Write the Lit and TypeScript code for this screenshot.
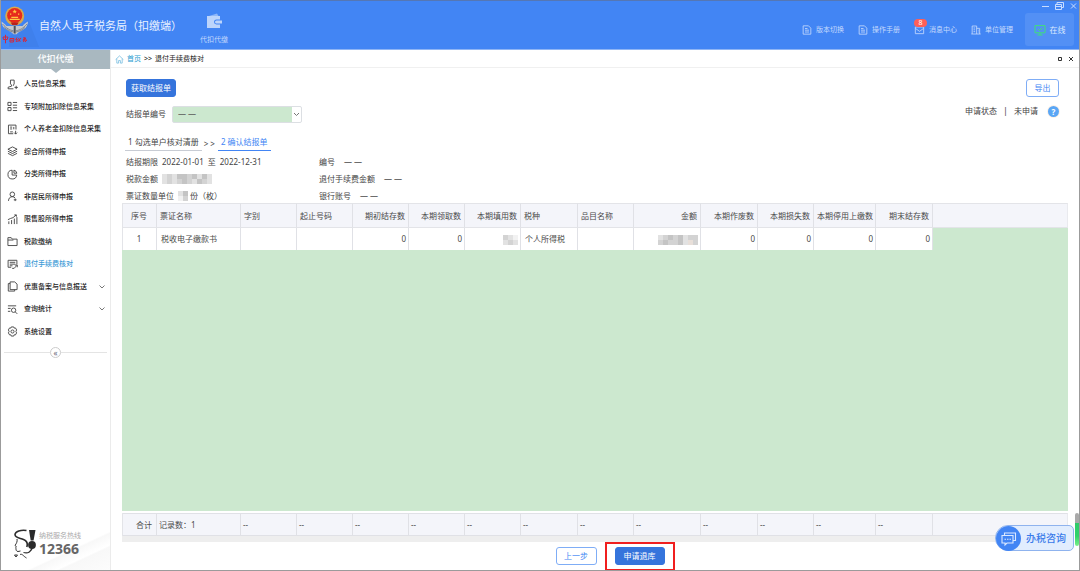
import { LitElement, html, css, svg, nothing, TemplateResult } from "lit";
import { customElement } from "lit/decorators.js";
import { classMap } from "lit/directives/class-map.js";

type Icon = TemplateResult;

/* 12-unit stroke icons for the navigation */
const icons: Record<string, Icon> = {
  person: svg`<path d="M3.800 1.200h4v4.200L7 6.600v.8M3.800 1.200v4.200L5 6.600v1.200L1.200 9v1.700h5.800M10 7.400v3.600M8.200 9.200h3.600"/>`,
  list: svg`<path d="M1 1.500h3.400v3.400H1zM1 7.100h3.400v3.400H1zM6.400 1.600H11M6.400 4.600H11M6.400 7.400H11M6.400 10.400H11"/>`,
  pension: svg`<path d="M9.800 6V1.200H1.600v9.400h5.200M3.400 3.400h2.200M3.400 5.400h2.200M3.400 8.600h3M7.400 3.200v2.600M9.400 7.400v3.600M7.800 9.400l1.600 1.600L11 9.400"/>`,
  layers: svg`<path d="M6 1l5 2.500L6 6 1 3.500zM1 5.700L6 8.200l5-2.500M1 8L6 10.500 11 8"/>`,
  pie: svg`<path d="M5.600 1.300A4.800 4.800 0 1 0 10.600 6.600H5.600z"/><path d="M7.600 1.200a4.400 4.400 0 0 1 3.200 3.400H7.600z"/>`,
  user: svg`<circle cx="5.800" cy="3.600" r="2.500"/><path d="M1.600 10.800c.2-3 1.800-4.600 4.200-4.600 1.400 0 2.400.5 3 1.400M7.400 9.600h3M8.900 8.200v2.800"/>`,
  chart: svg`<path d="M2 11V8M5 11V6.600M8 11V5M10.800 11V3.400M1 6.200l3-1.400 2.600-.8L10 1M8 1h2.200v2"/>`,
  folder: svg`<path d="M1 10.400V1.800h3.600l1.200 1.600H11v7zM1 4.400h6"/>`,
  refund: svg`<path d="M4.600 9H1.200V1.400h9.600V6M3 3.600h6M3 5.600h6M3 7.400h3M5.600 10.200h2.200L10.800 7M8.600 6.600h2.600v2.400"/>`,
  copy: svg`<path d="M3.400 1h5L11 3.400v6H3.400zM3.400 2.800H1.400V11h7V9.400"/>`,
  search: svg`<path d="M1 2h9M1 4.800h3M1 8h2.600"/><circle cx="7.200" cy="6.800" r="2.400"/><path d="M9 8.600l2.200 2.200"/>`,
  gear: svg`<path d="M4.700 1h2.600l.5 1.300 1.400-.2 1.300 2.200L9.700 6l.8 1.500-1.300 2.200-1.400-.1L7.300 11H4.700l-.5-1.400-1.400.1-1.300-2.200L2.300 6l-.8-1.700 1.300-2.200 1.400.2z"/><circle cx="6" cy="6" r="1.700"/>`,
  doc: svg`<path d="M1.400 1h6.400L10.600 3.800V11H1.400zM3.600 4.200h3M3.600 6.200h4.800M3.600 8.400h4.800"/>`,
  mail: svg`<path d="M1 2.400h10v8H1zM1 4l5 3.600L11 4"/>`,
  building: svg`<path d="M1.400 10.800V1.200h5.400v9.600M6.800 4h3.600v6.800M.4 10.800h11.200M3 3.600h2M3 5.800h2M3 8h2M8.400 6.200h.8M8.400 8.400h.8"/>`,
  monitor: svg`<path d="M1 1.600h10v7.200H1zM3.400 11h5.200M4 5l1.600 1.600L8.400 3.800M6 8.800V11"/>`,
  home: svg`<path d="M.8 6.200L6 1.200l5.200 5M2.400 5v5.800h2.400V7.400h2.400v3.400h2.400V5"/>`,
};

const icon = (name: string, cls = "") =>
  html`<svg class="ico ${cls}" viewBox="0 0 12 12" aria-hidden="true">${icons[name]}</svg>`;

const nav = [
  { icon: "person", label: "人员信息采集" },
  { icon: "list", label: "专项附加扣除信息采集" },
  { icon: "pension", label: "个人养老金扣除信息采集" },
  { icon: "layers", label: "综合所得申报" },
  { icon: "pie", label: "分类所得申报" },
  { icon: "user", label: "非居民所得申报" },
  { icon: "chart", label: "限售股所得申报" },
  { icon: "folder", label: "税款缴纳" },
  { icon: "refund", label: "退付手续费核对", active: true },
  { icon: "copy", label: "优惠备案与信息报送", more: true },
  { icon: "search", label: "查询统计", more: true },
  { icon: "gear", label: "系统设置" },
];

const columns = [
  { label: "序号", cls: "c34 mid" },
  { label: "票证名称", cls: "c84" },
  { label: "字别", cls: "c56" },
  { label: "起止号码", cls: "c56" },
  { label: "期初结存数", cls: "c56 num" },
  { label: "本期领取数", cls: "c56 num" },
  { label: "本期填用数", cls: "c56 num" },
  { label: "税种", cls: "c57" },
  { label: "品目名称", cls: "c56" },
  { label: "金额", cls: "c67 num" },
  { label: "本期作废数", cls: "c57 num" },
  { label: "本期损失数", cls: "c56 num" },
  { label: "本期停用上缴数", cls: "c62 num" },
  { label: "期末结存数", cls: "c57 num" },
];

const tones: Record<string, string> = {
  a: "#f2f2f2", b: "#e2e2e2", c: "#d3d3d3", d: "#c4c4c4", e: "#e8dfd9",
};

/* masked value: one letter per tile, one string per line */
const mask = (rows: string[]) => html`<svg class="mask" width=${rows[0].length * 5} height=${rows.length * 5} role="img" aria-label="已隐藏">
  ${rows.map((r, y) => [...r].map((t, x) => svg`<rect x=${x * 5} y=${y * 5} width="5" height="5" fill=${tones[t]}></rect>`))}
</svg>`;

const dataRow = [
  "1", "税收电子缴款书", "", "", "0", "0", mask(["cba", "bcb"]), "个人所得税", "",
  mask(["bcdcdbcc", "cdccdbec"]), "0", "0", "0", "0",
];

const totals = ["合计", "记录数：1", ...Array(12).fill("--")];

const font = css`font-family: "Noto Sans", "Noto Sans CJK SC", sans-serif;`;

@customElement("tax-header")
class TaxHeader extends LitElement {
  static styles = css`
    :host { display: flex; height: 49px; box-sizing: border-box; background: #4285f4; color: #dbe8ff; border-top: 1px solid #5577b4; position: relative; ${font} }
    .emblem { width: 38px; height: 48px; flex: none; }
    h1 { margin: 0; font-size: 11px; font-weight: 400; line-height: 50px; color: #e9f1ff; white-space: nowrap; }
    .app { display: flex; flex-direction: column; align-items: center; margin-left: 17px; padding: 12px 0 0; width: 30px; gap: 3px; font: inherit; font-size: 7px; line-height: 16px; color: #c5dafd; background: none; border: 0; white-space: nowrap; }
    .app svg { width: 16px; height: 16px; display: block; }
    .links { display: flex; gap: 14px; margin-left: auto; align-items: center; padding-top: 12px; height: 34px; box-sizing: content-box; }
    .links a { display: flex; align-items: center; gap: 4px; font-size: 7px; line-height: 12px; color: #c5dafd; text-decoration: none; white-space: nowrap; position: relative; }
    .ico { width: 10px; height: 10px; fill: none; stroke: currentColor; stroke-width: 1; flex: none; }
    .wide { width: 11px; }
    .badge { position: absolute; left: 0; top: -5px; width: 13px; height: 8px; border-radius: 4px; background: #ff5f57; color: #fff; font-size: 7px; line-height: 8px; text-align: center; }
    .online { margin: 12px 5px 0 12px; width: 49px; height: 33px; box-sizing: border-box; border: 0; padding: 0; border-radius: 3px; background: #5390f5; color: #dceaff; display: flex; align-items: center; justify-content: center; gap: 4px; font: inherit; font-size: 8px; }
    .green { width: 12px; height: 12px; stroke: #3fe07a; }
    .win { position: absolute; right: 1px; top: 0; display: flex; gap: 5px; }
    .win button { width: 9px; height: 10px; padding: 0; border: 0; background: none; color: #c9dcff; }
    .win svg { display: block; width: 9px; height: 10px; fill: none; stroke: currentColor; }
  `;
  render() {
    return html`
      <svg class="emblem" viewBox="0 0 38 48" role="img" aria-label="中国税务">
        <path d="M27 18L38 46H8V36z" fill="#3f80ec"></path>
        <path d="M.5 20.500c2 1.500 3 2 5 4.500h16c2-2.500 3-3 5.500-4.500-.2 3.500-1.500 6-4.500 8-2.500 1.800-5.500 2.500-6.800 4.800h-3.400C11 31 8 30.300 5.500 28.500 2 26.500.7 24 .5 20.500z" fill="#c5c8cc"></path>
        <path d="M1.500 23c4 4.500 7 6 11 6.800M26 23c-4 4.500-7 6-11 6.800M3.500 26.500c3 3 5 3.500 9 4.500M24 26.500c-3 3-5 3.500-9 4.500" fill="none" stroke="#707784" stroke-width=".8"></path>
        <circle cx="13.700" cy="15" r="9.500" fill="#d9a84c"></circle>
        <circle cx="13.700" cy="14.500" r="7.600" fill="#e62a1c"></circle>
        <path d="M13.700 8.300l.6 1.500 1.600.1-1.200 1 .4 1.600-1.400-.9-1.400.9.4-1.600-1.200-1 1.600-.1zM9 12.400h1.300v1.300H9zM17 12.400h1.300v1.300H17zM8.700 17.800h10V19h-10zM10.300 15.800h6.800v1.200h-6.800z" fill="#ffc943"></path>
        <path d="M9.700 21.500h8l-1.500 2.500h-5z" fill="#b8221d"></path>
        <path d="M12.700 25h2v7.500h-2z" fill="#4d525c"></path>
        <path d="M4.500 33.800v8.500M2 36h5l-.8 2.500H2.500zM9 37.500h4l-.5 3.500H9zM9.500 39.200h2.800M16 36.500l-1.300 2.300 1.800-.3-1.500 2.500M17.500 37l1.700 3.800M20 37l-3.500 4M22 36.800l3 .7-3.200 1.500h4l-1.800 2M24 36l-1.500 5" fill="none" stroke="#d5283c" stroke-width="1"></path>
      </svg>
      <h1>自然人电子税务局（扣缴端）</h1>
      <button class="app">
        <svg viewBox="0 0 16 16" aria-hidden="true">
          <path d="M3 3l8-2.500 1.500 2.500" fill="#8fb7f8"></path>
          <path d="M1 3h13v3.500h-3.500a2.500 2.500 0 0 0 0 5H14V15H1z" fill="#bcd4fb"></path>
          <path d="M10.500 7.500H16v3h-5.500a1.500 1.500 0 0 1 0-3z" fill="#bcd4fb"></path>
        </svg>代扣代缴
      </button>
      <nav class="links">
        <a href="#">${icon("doc")}版本切换</a>
        <a href="#">${icon("doc")}操作手册</a>
        <a href="#">${icon("mail", "wide")}消息中心<span class="badge">8</span></a>
        <a href="#">${icon("building")}单位管理</a>
      </nav>
      <button class="online">${icon("monitor", "green")}在线</button>
      <div class="win">
        <button aria-label="最小化"><svg viewBox="0 0 9 10"><path d="M1 5.500h7"/></svg></button>
        <button aria-label="还原"><svg viewBox="0 0 9 10"><path d="M.5 3.500h6v5h-6zM2 3V1.500h6.500v5H7M.5 5.500h6"/></svg></button>
        <button aria-label="关闭"><svg viewBox="0 0 9 10"><path d="M2 2.500l5 5M7 2.500l-5 5"/></svg></button>
      </div>`;
  }
}

@customElement("tax-sidebar")
class TaxSidebar extends LitElement {
  static styles = css`
    :host { display: flex; flex-direction: column; width: 109px; flex: none; border-right: 1px solid #ebebeb; background: #fff; color: #1c1c1c; ${font} }
    h2 { margin: 0; height: 19px; background: #a9b8c0; color: #fff; font-size: 9px; font-weight: 500; line-height: 18px; text-align: center; position: relative; }
    h2::after { content: ""; position: absolute; left: 50%; top: 19px; margin-left: -5px; border: 5px solid transparent; border-top: 4px solid #a9b8c0; border-bottom: 0; }
    ul { list-style: none; margin: 4px 0 0; padding: 0; height: 270px; display: grid; grid-template-rows: repeat(12, 1fr); }
    a { display: flex; align-items: center; height: 100%; padding: 0 5px 0 6px; font-size: 7px; font-weight: 500; color: inherit; text-decoration: none; white-space: nowrap; }
    .ico { width: 11px; height: 11px; margin-right: 6px; fill: none; stroke: #444; stroke-width: 1; flex: none; }
    .active { color: #3d9bd6; }
    .chev { width: 6px; height: 4px; margin-left: auto; fill: none; stroke: #777; }
    .fold { display: flex; align-items: center; margin: 4px 3px 0; }
    .fold::before, .fold::after { content: ""; flex: 1; border-top: 1px solid #e4e4e4; }
    .fold button { width: 11px; height: 11px; padding: 0; border: 1px solid #ccc; border-radius: 50%; background: #fff; color: #667; font: inherit; font-size: 8px; line-height: 6px; }
    .hot { margin-top: auto; height: 46px; display: flex; gap: 3px; padding-left: 13px; background: linear-gradient(155deg, #fff 60%, #f8f8f8 62%, #fff 74%, #f8f8f8 76%, #fcfcfc); }
    .hot svg { width: 22px; height: 30px; margin-top: 5px; }
    .hot p { margin: 8px 0 0; font-size: 7px; line-height: 8px; color: #aaa; white-space: nowrap; }
    .hot strong { display: block; font-size: 14px; line-height: 18px; color: #666; }
  `;
  render() {
    return html`
      <h2>代扣代缴</h2>
      <ul>
        ${nav.map((n) => html`<li><a href="#" class=${classMap({ active: !!n.active })}>${icon(n.icon)}${n.label}${n.more
          ? html`<svg class="chev" viewBox="0 0 6 4"><path d="M.5.5L3 3 5.500.5"/></svg>` : nothing}</a></li>`)}
      </ul>
      <div class="fold"><button aria-label="收起">«</button></div>
      <div class="hot">
        <svg viewBox="0 0 22 30" aria-hidden="true">
          <path d="M12.500 1.500C7 .5 1.200 2.500 1 5.500c0 3.500 5 3.500 8.500 5 3 1.300 4.500 4 3.300 7.500" fill="none" stroke="#2d2d2d" stroke-width="1.600"></path>
          <path d="M15 1h6.500l-2 10.500h-2.800z" fill="#2a2a2a"></path>
          <circle cx="18" cy="16" r="3.900" fill="#2a2a2a"></circle>
          <path d="M18.500 18c-1 4.500-4.500 7-9 5.500" fill="none" stroke="#2d2d2d" stroke-width="1.300"></path>
          <path d="M3 10c.5 2.500-.3 4-2 6.500l1.300 1c-.8 1-.3 1.500-.3 2.500s.5 2.500 2 2.500l2.500-.5" fill="none" stroke="#333" stroke-width="1"></path>
          <path d="M6 25.500c2.500-1 3 1.500 6.500 3.500M.5 26h3l-1.500 2z" fill="none" stroke="#333" stroke-width="1"></path>
        </svg>
        <p>纳税服务热线<strong>12366</strong></p>
      </div>`;
  }
}

@customElement("voucher-grid")
class VoucherGrid extends LitElement {
  static styles = css`
    :host { display: flex; flex-direction: column; flex: 1; min-height: 0; font-size: 8px; color: #4a4a4a; ${font} }
    table { width: 100%; table-layout: fixed; border-collapse: separate; border-spacing: 0; line-height: 12px; border-left: 1px solid #e3e4e8; }
    th, td { box-sizing: border-box; padding: 0 4px 0 3px; text-align: left; font-weight: 400; white-space: nowrap; border-right: 1px solid #e0e1e6; }
    th:last-child, td:last-child { border-right-color: #e9eaee; }
    th { height: 25px; background: #f4f5fa; border-top: 1px solid #e3e4e8; border-bottom: 1px solid #e3e4e8; }
    .head .num { padding-right: 3px; }
    tbody td { height: 22px; background: #fff; }
    tbody td:nth-child(2), tbody td:nth-child(8) { padding-left: 4px; }
    .num { text-align: right; }
    .mid { text-align: center; }
    .head tbody .num { padding-right: 2px; }
    tbody .rest { background: #cce8cf; border-color: #cce8cf; }
    .foot tbody td { height: 23px; background: #f4f5fa; border-top: 1px solid #e0e1e6; border-bottom: 1px solid #e0e1e6; text-align: left; padding-left: 2px; }
    .foot tbody .mid { text-align: right; padding-right: 4px; }
    .blank { flex: 1; background: #cce8cf; margin-bottom: 2px; }
    .track { height: 6px; background: #eee; }
    .mask { display: inline-block; vertical-align: middle; }
    .c34 { width: 34px; } .c84 { width: 84px; } .c56 { width: 56px; } .c57 { width: 57px; } .c62 { width: 62px; } .c67 { width: 67px; }
  `;
  render() {
    return html`
      <table class="head">
        <thead><tr>${columns.map((c) => html`<th scope="col" class=${c.cls}>${c.label}</th>`)}<th></th></tr></thead>
        <tbody><tr>${dataRow.map((v, i) => html`<td class=${columns[i].cls}>${v}</td>`)}<td class="rest"></td></tr></tbody>
      </table>
      <div class="blank"></div>
      <table class="foot">
        <tbody><tr>${totals.map((v, i) => html`<td class=${columns[i].cls}>${v}</td>`)}<td></td></tr></tbody>
      </table>
      <div class="track"></div>`;
  }
}

@customElement("app-root")
class AppRoot extends LitElement {
  static styles = css`
    :host { display: flex; flex-direction: column; height: 100vh; min-height: 480px; box-sizing: border-box; background: #fff; border: solid #9b9b9b; border-width: 0 1px 1px; position: relative; overflow: hidden; font-size: 8px; line-height: 12px; color: #444; ${font} }
    .body { flex: 1; display: flex; min-height: 0; border-top: 1px solid #8fb5f5; }
    main { flex: 1; min-width: 0; display: flex; flex-direction: column; }
    .crumb { height: 17px; display: flex; align-items: center; padding: 1px 5px 0 4px; box-sizing: border-box; height: 18px; gap: 3px; border-bottom: 1px solid #f0f0f0; font-size: 7px; color: #222; }
    .crumb a { display: flex; align-items: center; gap: 3px; color: #1b9bd0; text-decoration: none; }
    .crumb .ico { width: 9px; height: 9px; fill: none; stroke: #6fb8dd; }
    .crumb .tools { margin-left: auto; display: flex; gap: 5px; }
    .tools button { width: 6px; height: 6px; padding: 0; border: 0; background: none; }
    .tools svg { display: block; width: 6px; height: 6px; fill: none; stroke: #333; }
    .page { flex: 1; min-height: 0; display: flex; flex-direction: column; padding: 11px 11px 0; }
    .bar { display: flex; justify-content: space-between; padding: 0 9px 0 4px; }
    .btn { height: 18px; padding: 0 6px; border: 1px solid #7fadf6; border-radius: 3px; background: #fff; color: #4285f4; font: inherit; line-height: 14px; white-space: nowrap; }
    .primary { background: #3574dc; border-color: #3574dc; color: #fff; padding: 0 4px; }
    .out { width: 33px; }
    .query { margin-top: 8px; align-items: flex-start; }
    .field { display: flex; align-items: center; gap: 6px; height: 18px; }
    .pick { position: relative; display: flex; width: 130px; }
    select { appearance: none; width: 100%; height: 17px; border: 1px solid #dcdfe3; border-radius: 2px; padding: 0 14px 0 5px; background: linear-gradient(to left, #fff 9px, #cce8cf 9px); font: inherit; color: #555; }
    .pick svg { position: absolute; right: 2px; top: 6px; width: 7px; height: 5px; fill: none; stroke: #777; pointer-events: none; }
    .status { display: flex; align-items: center; gap: 6px; height: 12px; }
    .status .sep { font-size: 9px; }
    .help { width: 11px; height: 11px; margin-left: 4px; padding: 0; border: 0; border-radius: 50%; background: #5aa6f5; color: #fff; font: inherit; font-size: 8px; font-weight: 700; line-height: 11px; box-shadow: 0 0 0 1px #fdf1e6; }
    .steps { display: flex; margin: 11px 0 0 3px; height: 17px; }
    .steps span { box-sizing: border-box; padding: 2px 3px 0; border-bottom: 1px solid #c8ccd4; }
    .steps i { font-style: normal; padding: 4px 3px 0 2px; }
    .steps .on { color: #4285f4; border-color: #4285f4; }
    .info { display: grid; grid-template-columns: 193px 1fr; row-gap: 2px; margin: 3px 0 0; padding: 0 4px; line-height: 15px; }
    .info div { display: flex; gap: 4px; align-items: center; height: 15px; }
    .info dt, .info dd { margin: 0; white-space: nowrap; }
    .info dd { display: flex; align-items: center; gap: 2px; }
    .info .dash { padding-left: 5px; }
    .mask { display: block; }
    .actions { height: 28px; display: flex; justify-content: center; align-items: center; padding-left: 40px; gap: 8px; }
    .back { width: 41px; }
    .mark { border: 2px solid #f01f1f; padding: 3px 8px 4px; display: flex; }
    .send { width: 50px; }
    .chat { position: absolute; right: 5px; bottom: 19px; height: 26px; width: 79px; box-sizing: border-box; display: flex; align-items: center; gap: 5px; padding: 0; border: 1px solid #8fb3ee; border-radius: 13px 5px 5px 13px; background: #e1edfe; color: #3a7bea; font: inherit; font-size: 10px; font-weight: 500; white-space: nowrap; }
    .chat svg { width: 25px; height: 25px; flex: none; }
    .thumb { position: absolute; right: 0; bottom: 24px; width: 4px; height: 33px; border-radius: 2px; background: linear-gradient(#a9a9a9 10px, #2fcb6b 10px, #2fd36b 70%, #7cf08a); }
  `;
  render() {
    return html`
      <tax-header></tax-header>
      <div class="body">
        <tax-sidebar></tax-sidebar>
        <main>
          <div class="crumb">
            <a href="#">${icon("home")}首页</a><span>&gt;&gt;</span><span>退付手续费核对</span>
            <div class="tools">
              <button aria-label="最大化"><svg viewBox="0 0 6 6"><path d="M1.500 1.500h3v3h-3z"/></svg></button>
              <button aria-label="关闭"><svg viewBox="0 0 6 6"><path d="M1 1l4 4M5 1L1 5"/></svg></button>
            </div>
          </div>
          <div class="page">
            <div class="bar"><button class="btn primary">获取结报单</button><button class="btn out">导出</button></div>
            <div class="bar query">
              <div class="field">
                <label for="bill">结报单编号</label>
                <div class="pick">
                  <select id="bill"><option>— —</option></select>
                  <svg viewBox="0 0 7 5"><path d="M1 1l2.500 2.500L6 1"/></svg>
                </div>
              </div>
              <div class="status"><span>申请状态</span><span class="sep">|</span><span>未申请</span><button class="help" aria-label="帮助">?</button></div>
            </div>
            <div class="steps"><span>1 勾选单户核对清册</span><i>&gt; &gt;</i><span class="on">2 确认结报单</span></div>
            <dl class="info">
              <div><dt>结报期限</dt><dd>2022-01-01&ensp;至&ensp;2022-12-31</dd></div>
              <div><dt>编号</dt><dd class="dash">— —</dd></div>
              <div><dt>税款金额</dt><dd>${mask(["bcbddcdbdb", "bcbcdcbdcb"])}</dd></div>
              <div><dt>退付手续费金额</dt><dd class="dash">— —</dd></div>
              <div><dt>票证数量单位</dt><dd>${mask(["bd", "ac"])}份（枚）</dd></div>
              <div><dt>银行账号</dt><dd class="dash">— —</dd></div>
            </dl>
            <voucher-grid></voucher-grid>
          </div>
          <div class="actions">
            <button class="btn back">上一步</button>
            <div class="mark"><button class="btn primary send">申请退库</button></div>
          </div>
        </main>
      </div>
      <div class="thumb"></div>
      <button class="chat">
        <svg viewBox="0 0 25 25" aria-hidden="true"><circle cx="12.500" cy="12.500" r="12.500" fill="#4285f4"></circle>
          <path d="M8.500 9V7h11v7.500h-2M6 9.500h11V17h-6l-2 2v-2H6zM8.500 13.200h1.500M11 13.200h1.500M13.500 13.200H15" fill="none" stroke="#dce9ff" stroke-width="1.100"></path></svg>办税咨询
      </button>`;
  }
}
